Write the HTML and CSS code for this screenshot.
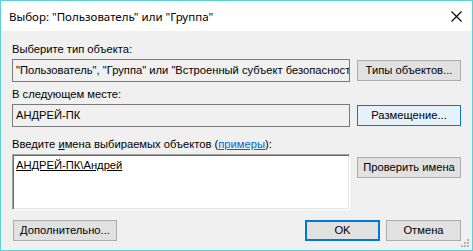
FILE: index.html
```html
<!DOCTYPE html>
<html lang="ru">
<head>
<meta charset="utf-8">
<title>Выбор</title>
<link rel="stylesheet" href="styles.css">
</head>
<body>
<div class="window">
  <div class="titlebar">
    <span class="title">Выбор: "Пользователь" или "Группа"</span>
    <span class="close">
      <svg width="11" height="11" viewBox="0 0 11 11"><path d="M0.5 0.5 L10.5 10.5 M10.5 0.5 L0.5 10.5" stroke="#000" stroke-width="1.1" fill="none"/></svg>
    </span>
  </div>
  <div class="content">
    <div class="label">Выберите тип объекта:</div>
    <div class="row">
      <div class="field">"Пользователь", "Группа" или "Встроенный субъект безопасности"</div>
      <button class="btn">Типы объектов...</button>
    </div>
    <div class="label label-gap">В следующем месте:</div>
    <div class="row">
      <div class="field">АНДРЕЙ-ПК</div>
      <button class="btn btn-hot">Размещение...</button>
    </div>
    <div class="label label-gap2">Введите <u>и</u>мена выбираемых объектов (<a class="link" href="#">примеры</a>):</div>
    <div class="row">
      <div class="textarea"><u>АНДРЕЙ-ПК\Андрей</u></div>
      <button class="btn btn-check">Проверить имена</button>
    </div>
    <div class="footer">
      <button class="btn btn-more">Дополнительно...</button>
      <div class="spacer"></div>
      <button class="btn btn-ok">OK</button>
      <button class="btn btn-cancel">Отмена</button>
    </div>
  </div>
  <svg class="grip" width="9" height="9" viewBox="0 0 9 9">
    <rect x="6" y="0" width="2" height="2" fill="#b4b4b4"/>
    <rect x="3" y="3" width="2" height="2" fill="#b4b4b4"/>
    <rect x="6" y="3" width="2" height="2" fill="#b4b4b4"/>
    <rect x="0" y="6" width="2" height="2" fill="#b4b4b4"/>
    <rect x="3" y="6" width="2" height="2" fill="#b4b4b4"/>
    <rect x="6" y="6" width="2" height="2" fill="#b4b4b4"/>
  </svg>
</div>
</body>
</html>
```

FILE: styles.css
```css
html, body {
  margin: 0;
  padding: 0;
  background: #ffffff;
}

.window {
  position: relative;
  width: 473px;
  height: 251px;
  box-sizing: border-box;
  border: 1px solid #5ccfd9;
  background: #f0f0f0;
  display: flex;
  flex-direction: column;
  font-family: "Liberation Sans", Arial, sans-serif;
  font-size: 11.2px;
  color: #000;
}

.titlebar {
  height: 30px;
  flex: none;
  background: #ffffff;
  display: flex;
  align-items: center;
  padding-left: 8px;
}

.title {
  font-family: "Noto Sans", "Open Sans", sans-serif;
  font-size: 11.5px;
  color: #000;
}

.close {
  margin-left: auto;
  margin-right: 10px;
  width: 11px;
  height: 11px;
  display: flex;
  margin-top: 1px;
}

.content {
  padding: 11px 11px 0 11px;
  display: flex;
  flex-direction: column;
}

.label {
  height: 14px;
  line-height: 14px;
  margin-bottom: 3px;
  white-space: nowrap;
}

.label-gap {
  margin-top: 5px;
}

.label-gap2 {
  margin-top: 10px;
}

.link {
  color: #0066cc;
  text-decoration: underline;
}

.row {
  display: grid;
  grid-template-columns: 338px 104px;
  column-gap: 7px;
  align-items: start;
}

.field {
  height: 23px;
  box-sizing: border-box;
  border: 1px solid #7a7a7a;
  background: #f0f0f0;
  padding: 0 3px;
  line-height: 21px;
  white-space: nowrap;
  overflow: hidden;
  text-overflow: clip;
}

.textarea {
  height: 56px;
  box-sizing: border-box;
  background: #ffffff;
  border-top: 1px solid #a0a0a0;
  border-left: 1px solid #a0a0a0;
  border-right: 1px solid #ffffff;
  border-bottom: 1px solid #ffffff;
  box-shadow: inset 1px 1px 0 #696969, inset -1px -1px 0 #e3e3e3;
  padding: 3px 3px;
  line-height: 14px;
  white-space: nowrap;
}

.btn {
  height: 21px;
  box-sizing: border-box;
  margin: 1px 0 0 0;
  padding: 0;
  border: 1px solid #adadad;
  background: #e1e1e1;
  font-family: "Liberation Sans", Arial, sans-serif;
  font-size: 11.2px;
  color: #000;
  line-height: 19px;
  text-align: center;
  white-space: nowrap;
}

.btn-hot {
  background: #e5f1fb;
  border-color: #0078d7;
}

.btn-check {
  margin-top: 3px;
}

.footer {
  display: flex;
  align-items: flex-start;
  margin-top: 10px;
}

.spacer {
  flex: 1;
}

.footer .btn {
  margin-top: 0;
}

.btn-more {
  width: 104px;
  margin-left: 1px;
}

.btn-ok {
  width: 75px;
  border: 2px solid #0078d7;
  line-height: 17px;
}

.btn-cancel {
  width: 75px;
  margin-left: 6px;
}

.grip {
  position: absolute;
  right: 2px;
  bottom: 2px;
}
```
